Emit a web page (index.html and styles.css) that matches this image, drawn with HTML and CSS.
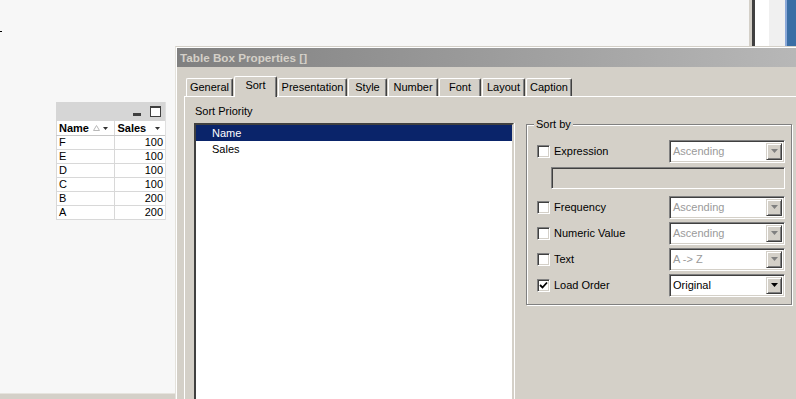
FILE: index.html
```html
<!DOCTYPE html>
<html>
<head>
<meta charset="utf-8">
<link rel="stylesheet" href="styles.css">
</head>
<body>
<div class="desk">
  <span class="tick"></span>
  <div class="strip"><i class="s-gray"></i><i class="s-dark"></i><i class="s-white"></i><i class="s-light"></i><i class="s-edge"></i><i class="s-blue"></i></div>
  <div class="bottombar"></div>

  <div class="tablebox">
    <div class="tb-cap">
      <span class="ic-min"></span>
      <span class="ic-max"></span>
    </div>
    <div class="tb-row tb-head">
      <span class="c1">Name
        <svg class="sortup" width="7" height="6" viewBox="0 0 7 6"><path d="M3.5 0.5 L6.5 5.5 L0.5 5.5 Z" fill="none" stroke="#b8b8b8" stroke-width="1"/></svg>
        <svg class="dd" width="5" height="3" viewBox="0 0 5 3"><path d="M0 0 H5 L2.5 3 Z" fill="#333"/></svg>
      </span>
      <span class="c2">Sales
        <svg class="dd" width="5" height="3" viewBox="0 0 5 3"><path d="M0 0 H5 L2.5 3 Z" fill="#333"/></svg>
      </span>
    </div>
    <div class="tb-row"><span class="c1">F</span><span class="c2">100</span></div>
    <div class="tb-row"><span class="c1">E</span><span class="c2">100</span></div>
    <div class="tb-row"><span class="c1">D</span><span class="c2">100</span></div>
    <div class="tb-row"><span class="c1">C</span><span class="c2">100</span></div>
    <div class="tb-row"><span class="c1">B</span><span class="c2">200</span></div>
    <div class="tb-row"><span class="c1">A</span><span class="c2">200</span></div>
  </div>

  <div class="dialog">
    <div class="title">Table Box Properties []</div>
    <div class="tabs">
      <div class="tab t-general">General</div>
      <div class="tab t-sort sel">Sort</div>
      <div class="tab t-pres">Presentation</div>
      <div class="tab t-style">Style</div>
      <div class="tab t-number">Number</div>
      <div class="tab t-font">Font</div>
      <div class="tab t-layout">Layout</div>
      <div class="tab t-caption">Caption</div>
    </div>
    <div class="panel">
      <div class="leftcol">
        <div class="lbl">Sort Priority</div>
        <div class="listbox">
          <div class="item selitem">Name</div>
          <div class="item">Sales</div>
        </div>
      </div>
      <div class="group">
        <div class="legend">Sort by</div>
        <div class="row">
          <span class="cb"></span><span class="cblabel">Expression</span>
          <div class="combo dis"><span class="ctext">Ascending</span><span class="cbtn"><svg width="7" height="4" viewBox="0 0 7 4"><path d="M0 0 H7 L3.5 4 Z" fill="#808080"/></svg></span></div>
        </div>
        <div class="exprfield"></div>
        <div class="row first">
          <span class="cb"></span><span class="cblabel">Frequency</span>
          <div class="combo dis"><span class="ctext">Ascending</span><span class="cbtn"><svg width="7" height="4" viewBox="0 0 7 4"><path d="M0 0 H7 L3.5 4 Z" fill="#808080"/></svg></span></div>
        </div>
        <div class="row">
          <span class="cb"></span><span class="cblabel">Numeric Value</span>
          <div class="combo dis"><span class="ctext">Ascending</span><span class="cbtn"><svg width="7" height="4" viewBox="0 0 7 4"><path d="M0 0 H7 L3.5 4 Z" fill="#808080"/></svg></span></div>
        </div>
        <div class="row">
          <span class="cb"></span><span class="cblabel">Text</span>
          <div class="combo dis"><span class="ctext">A -&gt; Z</span><span class="cbtn"><svg width="7" height="4" viewBox="0 0 7 4"><path d="M0 0 H7 L3.5 4 Z" fill="#808080"/></svg></span></div>
        </div>
        <div class="row">
          <span class="cb"><svg width="9" height="9" viewBox="0 0 9 9"><path d="M1 4 L3.5 6.5 L8 1.5" fill="none" stroke="#000" stroke-width="1.8"/></svg></span><span class="cblabel">Load Order</span>
          <div class="combo"><span class="ctext">Original</span><span class="cbtn"><svg width="7" height="4" viewBox="0 0 7 4"><path d="M0 0 H7 L3.5 4 Z" fill="#000"/></svg></span></div>
        </div>
      </div>
    </div>
  </div>
</div>
</body>
</html>
```

FILE: styles.css
```css
* { box-sizing: border-box; }
html, body { margin: 0; padding: 0; }
body {
  width: 796px; height: 399px; overflow: hidden;
  background: #f7f7f7;
  font-family: "Liberation Sans", Arial, sans-serif;
  font-size: 11px; color: #000;
}
.desk { position: relative; width: 796px; height: 399px; overflow: hidden; }

.tick { position: absolute; left: 0; top: 31px; width: 2px; height: 1px; background: #000; }

.strip { position: absolute; left: 749px; top: 0; height: 46px; display: flex; }
.strip i { display: block; height: 100%; }
.s-gray { width: 3px; background: #d4d0c8; }
.s-dark { width: 3px; background: #404040; }
.s-white { width: 14px; background: #ffffff; }
.s-light { width: 16px; background: #f0f0f0; }
.s-edge { width: 2px; background: #8aa8d8; }
.s-blue { width: 20px; background: #3a6ea5; }

.bottombar { position: absolute; left: 0; top: 393px; width: 180px; height: 6px; background: #d4d0c8; border-top: 1px solid #e6e4de; }

/* table box */
.tablebox { position: absolute; left: 56px; top: 102px; width: 110px; background: #fff; border-right: 1px solid #e0e0e0; }
.tb-cap { height: 19px; background: #d6d6d6; display: flex; align-items: center; justify-content: flex-end; padding-right: 4px; gap: 9px; }
.ic-min { width: 8px; height: 3px; background: #404040; margin-top: 5px; }
.ic-max { width: 11px; height: 11px; border: 1px solid #404040; border-top-width: 2px; background: #fff; }
.tb-row { display: flex; height: 14px; line-height: 13px; border-bottom: 1px solid #d8d8d8; color: #000; }
.tb-head { height: 15px; font-weight: bold; background: #fff; border-bottom: 1px solid #c8c8c8; }
.c1 { width: 60px; padding-left: 2px; border-right: 1px solid #d8d8d8; border-left: 1px solid #d8d8d8; display: flex; align-items: center; white-space: nowrap; }
.c2 { width: 50px; padding-right: 2px; text-align: right; display: flex; align-items: center; justify-content: flex-end; }
.tb-head .c2 { justify-content: flex-start; padding-left: 2px; }
.sortup { margin-left: 4px; }
.dd { margin-left: 3px; }
.tb-head .c2 .dd { margin-left: 9px; }

/* dialog */
.dialog {
  position: absolute; left: 175px; top: 46px; width: 630px; height: 360px;
  background: #d4d0c8;
  border-top: 1px solid #d4d0c8; border-left: 1px solid #e4e2dc;
  padding: 1px 0 0 1px;
  box-shadow: inset 1px 1px 0 #ffffff;
}
.title {
  height: 19px; line-height: 19px; padding-left: 3px;
  background: linear-gradient(90deg, #808080 0%, #b8b8b8 100%);
  color: #d4d0c8; font-weight: bold; font-size: 11.7px;
}
.tabs { display: flex; align-items: flex-end; margin: 8px 0 0 9px; height: 21px; position: relative; z-index: 1; }
.tab {
  height: 18px; line-height: 17px; text-align: center;
  border-top: 1px solid #fff; border-left: 1px solid #fff;
  border-right: 1px solid #404040;
  box-shadow: inset -1px 0 0 #808080;
  border-top-left-radius: 2px; border-top-right-radius: 2px;
  margin-right: 1px;
}
.tab.sel { height: 21px; line-height: 17px; margin-bottom: -1px; background: #d4d0c8; }
.t-general { width: 47px; }
.t-sort { width: 43px; }
.t-pres { width: 69px; }
.t-style { width: 39px; }
.t-number { width: 50px; }
.t-font { width: 42px; }
.t-layout { width: 43px; }
.t-caption { width: 46px; }

.panel {
  margin-left: 7px; height: 320px;
  border-top: 1px solid #fff; border-left: 1px solid #fff;
  display: flex; align-items: flex-start;
  padding: 8px 0 0 9px;
}
.leftcol { width: 320px; }
.lbl { height: 13px; line-height: 13px; padding-left: 1px; margin-bottom: 5px; }
.listbox {
  height: 300px; background: #fff;
  border-top: 2px solid #404040; border-left: 2px solid #404040;
  border-right: 2px solid #d4d0c8;
  box-shadow: 1px 0 0 #fff;
}
.item { height: 16px; line-height: 16px; padding-left: 16px; }
.selitem { background: #0a246a; color: #fff; }

.group {
  margin: 19px 0 0 12px; width: 266px;
  border: 1px solid #808080;
  box-shadow: inset 1px 1px 0 #fff, 1px 1px 0 #fff;
  padding-bottom: 8px;
}
.legend { display: table; margin: -7px 0 9px 7px; padding: 0 2px; background: #d4d0c8; height: 13px; line-height: 13px; }
.row { display: flex; align-items: center; height: 22px; margin-top: 4px; }
.legend + .row { margin-top: 0; }
.row.first { margin-top: 7px; }
.cb {
  width: 13px; height: 13px; margin-left: 10px; background: #fff;
  border-top: 1px solid #808080; border-left: 1px solid #808080;
  border-right: 1px solid #fff; border-bottom: 1px solid #fff;
  box-shadow: inset 1px 1px 0 #404040, inset -1px -1px 0 #d4d0c8;
  display: flex; align-items: center; justify-content: center;
}
.cblabel { margin-left: 4px; }
.combo {
  margin-left: auto; margin-right: 6px; width: 116px; height: 23px;
  background: #fff;
  border-top: 1px solid #808080; border-left: 1px solid #808080;
  border-right: 1px solid #fff; border-bottom: 1px solid #fff;
  box-shadow: inset 1px 1px 0 #404040, inset -1px -1px 0 #d4d0c8;
  display: flex; align-items: center; padding: 2px 2px 2px 3px;
}
.ctext { flex: 1; line-height: 17px; }
.dis .ctext { color: #9a9a9a; }
.cbtn {
  width: 16px; height: 17px; background: #d4d0c8;
  border-top: 1px solid #d4d0c8; border-left: 1px solid #d4d0c8;
  border-right: 1px solid #404040; border-bottom: 1px solid #404040;
  box-shadow: inset 1px 1px 0 #fff, inset -1px -1px 0 #808080;
  display: flex; align-items: center; justify-content: center;
}
.exprfield {
  margin: 5px 6px 0 24px; height: 22px;
  border-top: 1px solid #808080; border-left: 1px solid #808080;
  border-right: 1px solid #fff; border-bottom: 1px solid #fff;
  box-shadow: inset 1px 1px 0 #404040, inset -1px -1px 0 #d4d0c8;
  background: #d4d0c8;
}
```
